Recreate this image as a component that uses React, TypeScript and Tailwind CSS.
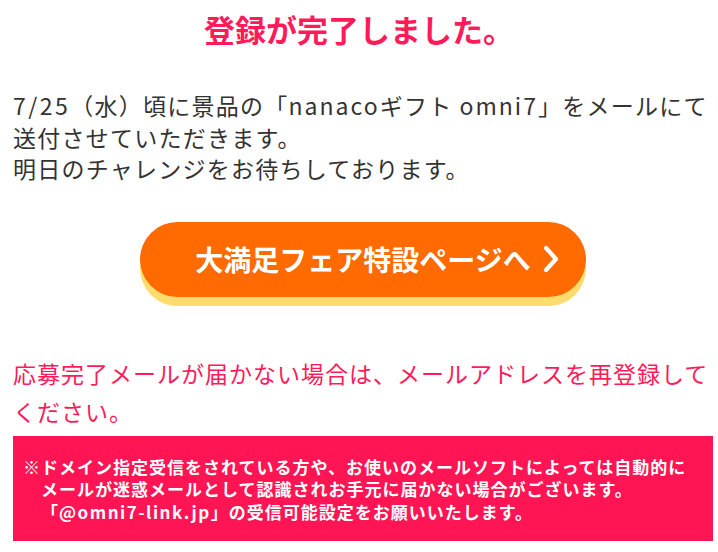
import React from 'react';

const jp = { fontFamily: '"Noto Sans CJK JP", "Noto Sans", sans-serif' };

export default function App() {
  return (
    <div className="min-h-[552px] bg-white" style={jp}>
      <h1 className="pt-[6px] text-center text-[31px] font-bold leading-[45px] text-[#ff1a5a]">
        登録が完了しました。
      </h1>

      <div className="pl-[13px] pr-[5px]">
        {/* Message */}
        <p className="mt-[39px] text-[23px] leading-[31.5px] tracking-[1.25px] text-[#333333] whitespace-nowrap">
          <span className="tracking-[2.5px]">7/25</span>（水）頃に景品の「<span className="tracking-[2px]">nanaco</span>ギフト
          <span className="tracking-[2px]"> omni7</span>」をメールにて
          <br />
          送付させていただきます。
          <br />
          明日のチャレンジをお待ちしております。
        </p>

        {/* CTA button */}
        <div className="mt-[37px] flex justify-center">
          <a
            href="#"
            className="relative flex h-[75px] w-[446px] items-center justify-center rounded-full bg-[#ff6b00] shadow-[0_9px_0_#ffdc6e]"
          >
            <span className="text-[28px] font-bold leading-none text-white">大満足フェア特設ページへ</span>
            <svg
              className="absolute right-[24px] top-1/2 -translate-y-1/2"
              width="22"
              height="30"
              viewBox="0 0 22 30"
              fill="none"
            >
              <path d="M6 4 L16 15 L6 26" stroke="white" strokeWidth="4.2" strokeLinecap="round" strokeLinejoin="round" />
            </svg>
          </a>
        </div>

        {/* Notice */}
        <p className="mt-[57px] text-[23px] leading-[38px] tracking-[1px] text-[#ff1a5a] whitespace-nowrap">
          応募完了メールが届かない場合は、メールアドレスを再登録して
          <br />
          ください。
        </p>

        <div className="mt-[6px] bg-[#ff1454] pt-[20px] pb-[18px] pl-[28px] pr-[8px]">
          <p className="-indent-[18px] text-[17px] font-bold leading-[22.5px] tracking-[1px] text-white">
            ※ドメイン指定受信をされている方や、お使いのメールソフトによっては自動的に
            <br />
            メールが迷惑メールとして認識されお手元に届かない場合がございます。
            <br />
            「<span className="tracking-[1.5px]">@omni7-link.jp</span>」の受信可能設定をお願いいたします。
          </p>
        </div>
      </div>
    </div>
  );
}
